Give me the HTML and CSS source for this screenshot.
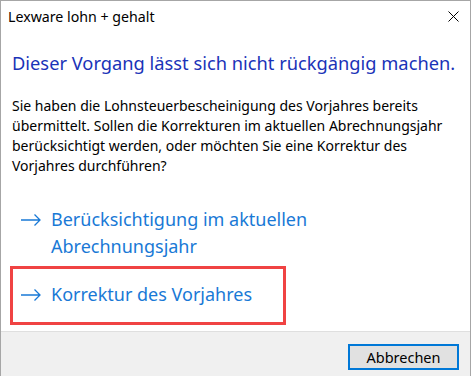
FILE: index.html
```html
<!DOCTYPE html>
<html lang="de">
<head>
    <meta charset="UTF-8">
    <meta name="viewport" content="width=device-width, initial-scale=1.0">
    <title>Lexware lohn + gehalt</title>
    <link rel="stylesheet" href="styles.css">
</head>
<body>
    <div class="window">
        <div class="titlebar">
            <span class="title">Lexware lohn + gehalt</span>
            <button class="close-button" aria-label="Schließen">
                <svg width="11" height="11" viewBox="0 0 11 11">
                    <path d="M0.5 0.5 L10.5 10.5 M10.5 0.5 L0.5 10.5" stroke="#000" stroke-width="1" fill="none"/>
                </svg>
            </button>
        </div>

        <div class="content">
            <h1 class="instruction">Dieser Vorgang lässt sich nicht rückgängig machen.</h1>
            <p class="message">Sie haben die Lohnsteuerbescheinigung des Vorjahres bereits übermittelt. Sollen die Korrekturen im aktuellen Abrechnungsjahr berücksichtigt werden, oder möchten Sie eine Korrektur des Vorjahres durchführen?</p>

            <div class="command-links">
                <a class="command-link" href="#">
                    <svg class="arrow" width="20" height="12" viewBox="0 0 20 12">
                        <path d="M0 6 H19 M13.5 0.5 L19 6 L13.5 11.5" stroke="currentColor" stroke-width="1.3" fill="none"/>
                    </svg>
                    <span class="link-text">Berücksichtigung im aktuellen<br>Abrechnungsjahr</span>
                </a>
                <a class="command-link highlighted" href="#">
                    <svg class="arrow" width="20" height="12" viewBox="0 0 20 12">
                        <path d="M0 6 H19 M13.5 0.5 L19 6 L13.5 11.5" stroke="currentColor" stroke-width="1.3" fill="none"/>
                    </svg>
                    <span class="link-text">Korrektur des Vorjahres</span>
                </a>
            </div>
        </div>

        <div class="footer">
            <button class="dialog-button">Abbrechen</button>
        </div>
    </div>
</body>
</html>
```

FILE: styles.css
```css
:root {
    --border-color: #a6a6a6;
    --instruction-color: #1a33b8;
    --link-color: #1979d6;
    --footer-background: #f0f0f0;
    --highlight-color: #f04343;
    --font: "Noto Sans", "Open Sans", sans-serif;
}

* {
    margin: 0;
    padding: 0;
    box-sizing: border-box;
}

body {
    font-family: var(--font);
    color: #000;
    background: #fff;
}

.window {
    height: 100vh;
    border: 1px solid var(--border-color);
    border-bottom: none;
    display: flex;
    flex-direction: column;
}

.titlebar {
    height: 31px;
    display: flex;
    align-items: center;
    justify-content: space-between;
    padding-left: 7px;
}

.title {
    font-size: 14.2px;
    line-height: 31px;
}

.close-button {
    border: none;
    background: none;
    width: 33px;
    height: 31px;
    display: flex;
    align-items: center;
    justify-content: center;
}

.content {
    padding: 18px 11px 0;
}

.instruction {
    font-size: 18.3px;
    font-weight: normal;
    line-height: 26px;
    color: var(--instruction-color);
    white-space: nowrap;
}

.message {
    font-size: 14px;
    line-height: 20px;
    margin-top: 20px;
}

.command-links {
    display: flex;
    flex-direction: column;
    gap: 21px;
    margin-top: 30px;
}

.command-link {
    position: relative;
    display: flex;
    align-items: flex-start;
    gap: 10px;
    padding-left: 9px;
    color: var(--link-color);
    text-decoration: none;
    font-size: 18px;
    line-height: 27px;
}

.command-link .arrow {
    flex-shrink: 0;
    margin-top: 8px;
}

/* annotation box drawn over the selected option */
.command-link.highlighted::after {
    content: "";
    position: absolute;
    top: -15px;
    left: -2px;
    width: 270px;
    height: 53px;
    border: 3px solid var(--highlight-color);
}

.footer {
    margin-top: auto;
    height: 45px;
    background: var(--footer-background);
    border-top: 1px solid #dfdfdf;
    display: flex;
    justify-content: flex-end;
    align-items: flex-start;
    padding: 12px 11px 0;
}

.dialog-button {
    width: 111px;
    height: 26px;
    border: 2px solid #0078d7;
    background: #e1e1e1;
    font-family: var(--font);
    font-size: 14.5px;
    color: #000;
}
```
